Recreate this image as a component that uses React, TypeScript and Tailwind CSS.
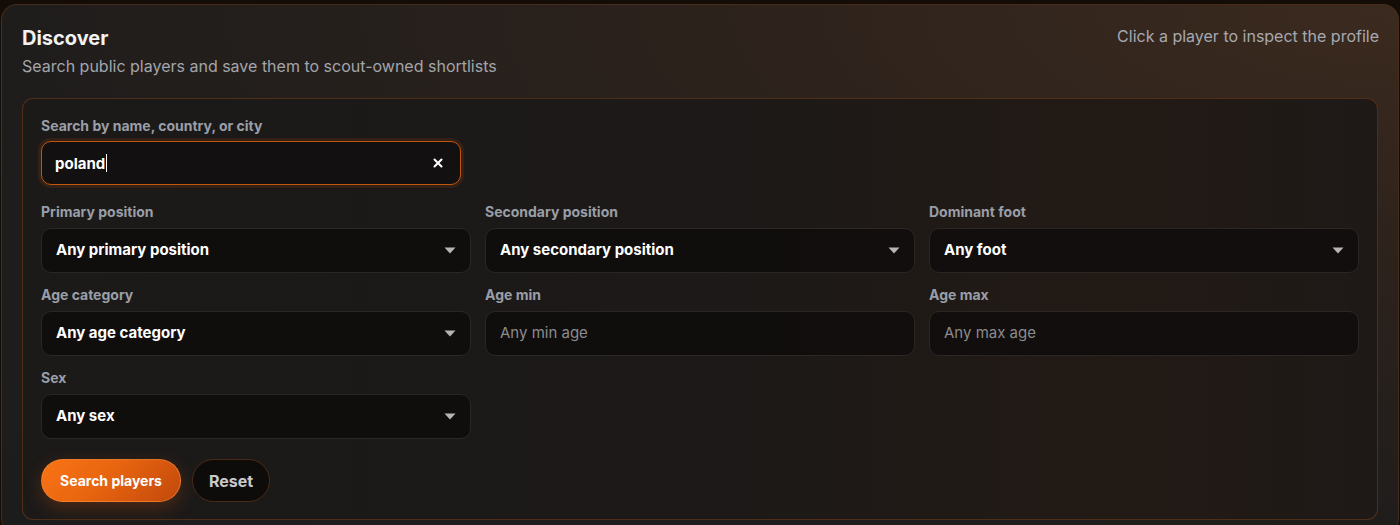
import { X } from 'lucide-react'

const font = { fontFamily: 'Inter, "Noto Sans", "Liberation Sans", sans-serif' }

function Caret() {
  return (
    <svg width="12" height="7" viewBox="0 0 12 7" className="shrink-0">
      <path d="M0.5 0.5h11L6 6.5z" fill="#b5b5b8" />
    </svg>
  )
}

function FieldLabel({ children }: { children: string }) {
  return <span className="text-[14px] font-bold leading-[17px] text-[#9a9ea7]">{children}</span>
}

function SelectField({ label, value }: { label: string; value: string }) {
  return (
    <div className="flex flex-col gap-[8px]">
      <FieldLabel>{label}</FieldLabel>
      <div className="flex h-[45px] items-center justify-between rounded-[10px] border border-[#2a2624] bg-[#0f0d0c]/90 pl-[14px] pr-[14px]">
        <span className="text-[15px] font-bold text-white">{value}</span>
        <Caret />
      </div>
    </div>
  )
}

function NumberField({ label, placeholder }: { label: string; placeholder: string }) {
  return (
    <div className="flex flex-col gap-[8px]">
      <FieldLabel>{label}</FieldLabel>
      <div className="flex h-[45px] items-center rounded-[10px] border border-[#2a2624] bg-[#0f0d0c]/90 px-[14px]">
        <span className="text-[15px] text-[#8b8b90]">{placeholder}</span>
      </div>
    </div>
  )
}

export default function App() {
  return (
    <div className="min-h-screen bg-[#140c07] px-px pt-[4px]" style={font}>
      <section className="min-h-[530px] rounded-[16px] border border-[#5a3218]/70 bg-[radial-gradient(ellipse_at_top_right,#3b2a1f_0%,#2c221c_35%,#1f1d1c_70%,#1d1c1c_100%)] px-[20px] pt-[21px]">
        {/* Header */}
        <div className="flex items-start justify-between">
          <div>
            <h1 className="text-[20px] font-bold leading-[24px] text-[#f2f2f2]">Discover</h1>
            <p className="mt-[6px] text-[16px] leading-[20px] text-[#a3a5ab]">
              Search public players and save them to scout-owned shortlists
            </p>
          </div>
          <p className="mr-[-1px] text-[16px] leading-[20px] text-[#a7a9b0]">Click a player to inspect the profile</p>
        </div>

        {/* Filters */}
        <div className="mt-[22px] rounded-[11px] border border-[#5c3319]/80 bg-[linear-gradient(90deg,#1b1a19_0%,#1c1918_50%,#221a15_80%,#1e1917_100%)] p-[18px] pb-[17px]">
          <div className="flex flex-col gap-[7px]">
            <FieldLabel>Search by name, country, or city</FieldLabel>
            <div className="flex h-[44px] w-[420px] items-center justify-between rounded-[10px] border border-[#c2560f] bg-[#121010] pl-[13px] pr-[15px] shadow-[0_0_0_3px_rgba(234,88,12,0.12)]">
              <span className="text-[15px] font-bold text-white">
                poland<span className="ml-px inline-block h-[18px] w-px translate-y-[3px] bg-white" />
              </span>
              <X className="h-[14px] w-[14px] text-white" strokeWidth={3.5} />
            </div>
          </div>

          <div className="mt-[18px] grid grid-cols-3 gap-x-[14px] gap-y-[13px]">
            <SelectField label="Primary position" value="Any primary position" />
            <SelectField label="Secondary position" value="Any secondary position" />
            <SelectField label="Dominant foot" value="Any foot" />
            <SelectField label="Age category" value="Any age category" />
            <NumberField label="Age min" placeholder="Any min age" />
            <NumberField label="Age max" placeholder="Any max age" />
            <SelectField label="Sex" value="Any sex" />
          </div>

          <div className="mt-[20px] flex items-center gap-[11px]">
            <button className="h-[43px] rounded-full border border-[#f08a3c]/60 bg-[linear-gradient(135deg,#f97316_0%,#e8650f_45%,#c2480c_100%)] px-[18px] text-[14px] font-bold text-white shadow-[0_6px_18px_rgba(234,88,12,0.25)]">
              Search players
            </button>
            <button className="h-[43px] rounded-full border border-[#4a2a16] bg-[#0e0c0b] px-[16px] text-[16px] font-bold text-[#c9c9cc]">
              Reset
            </button>
          </div>
        </div>
      </section>
    </div>
  )
}
